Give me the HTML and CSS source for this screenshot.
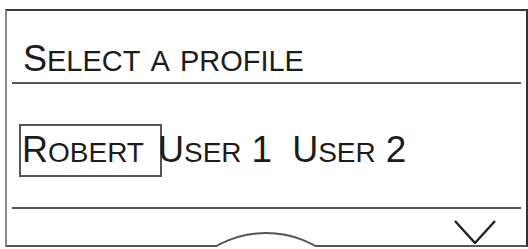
FILE: index.html
```html
<!DOCTYPE html>
<html>
<head>
<meta charset="utf-8">
<link rel="stylesheet" href="styles.css">
</head>
<body>
<div class="frame">
  <div class="header">
    <h1 class="title"><span class="cap">S</span><span class="sc">elect</span> <span class="sc">a</span> <span class="sc">profile</span></h1>
  </div>
  <div class="divider"></div>
  <div class="profiles">
    <span class="profile selected"><span class="cap">R</span><span class="sc">obert</span></span><span class="profile p1"><span class="cap">U</span><span class="sc">ser</span> <span class="num">1</span></span><span class="profile p2"><span class="cap">U</span><span class="sc">ser</span> <span class="num">2</span></span>
  </div>
  <div class="divider"></div>
  <div class="footer">
    <svg class="chevron" width="44" height="26" viewBox="0 0 44 26"><polyline points="2,3 22,25 42,3" fill="none" stroke="#222" stroke-width="2.4"/></svg>
  </div>
</div>
<div class="dial-wrap"><div class="dial"></div></div>
</body>
</html>
```

FILE: styles.css
```css
html, body {
  margin: 0;
  padding: 0;
  background: #fff;
}
body {
  font-family: "Liberation Sans", Arial, sans-serif;
  color: #1c1c1c;
  width: 528px;
  height: 249px;
  overflow: hidden;
}
.frame {
  box-sizing: border-box;
  margin: 9px 0 0 5px;
  width: 523px;
  height: 238px;
  border-top: 2px solid #3a3a3a;
  border-right: 2px solid #333;
  border-bottom: 2px solid #555;
  border-left: 2px solid #8a8a8a;
}
.header {
  box-sizing: border-box;
  height: 71px;
  padding: 28px 0 0 16px;
}
.title {
  margin: 0;
  font-weight: normal;
  font-size: 36px;
  line-height: 40px;
  white-space: nowrap;
}
.cap { font-size: 36px; }
.sc {
  text-transform: uppercase;
  font-size: 29px;
  line-height: 0;
}
.divider {
  height: 2px;
  background: #555;
  margin: 0 5px;
}
.profiles {
  height: 123px;
  box-sizing: border-box;
  padding: 41px 0 0 12px;
  font-size: 36px;
  line-height: 40px;
  white-space: nowrap;
}
.profiles .sc { font-size: 28px; }
.num { font-size: 37px; line-height: 0; letter-spacing: 1px; }
.profile { display: inline-block; }
.selected {
  box-sizing: border-box;
  width: 143px;
  border: 2px solid #555;
  padding: 4px 0 5px 1px;
  margin-top: -1px;
  margin-right: -4px;
}
.p2 { margin-left: 19px; }
.footer {
  display: flex;
  justify-content: flex-end;
  padding: 9px 29px 0 0;
}
.chevron { display: block; }
.dial-wrap {
  position: absolute;
  left: 212px;
  top: 230px;
  width: 108px;
  height: 17px;
  overflow: hidden;
}
.dial {
  position: absolute;
  left: -48px;
  top: 2px;
  width: 204px;
  height: 204px;
  box-sizing: border-box;
  border: 2px solid #555;
  border-radius: 50%;
  background: #fff;
}
```
